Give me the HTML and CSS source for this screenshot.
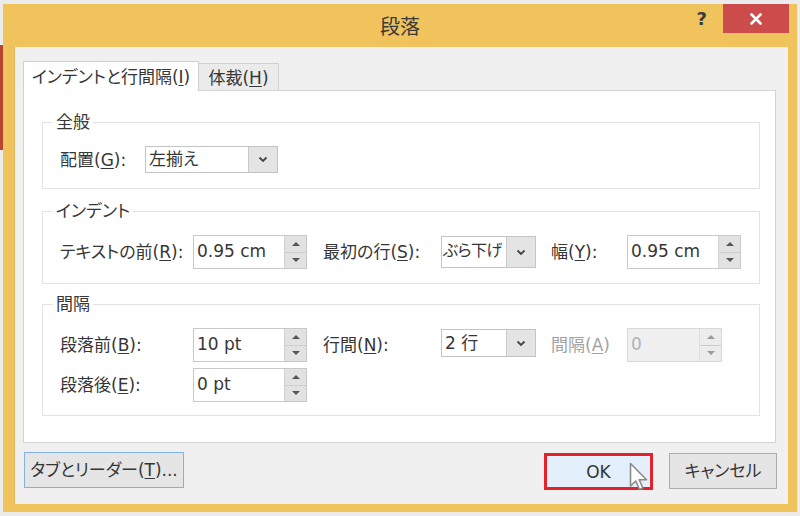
FILE: index.html
```html
<!DOCTYPE html>
<html lang="ja">
  <head>
    <meta charset="UTF-8" />
    <title>段落</title>
    <link rel="stylesheet" href="styles.css">
  </head>
  <body>
    <div class="window">
      <div class="titlebar">
        <span></span>
        <span class="title">段落</span>
        <div class="controls">
          <span class="help">?</span>
          <span class="close">
            <svg width="12" height="12" viewBox="0 0 12 12"><path d="M1.5 1.5L10.5 10.5M10.5 1.5L1.5 10.5" stroke="#fff" stroke-width="2.6" stroke-linecap="round"/></svg>
          </span>
        </div>
      </div>
      <div class="body">
        <div class="tabs">
          <div class="tab active">インデントと行間隔(<u>I</u>)</div>
          <div class="tab">体裁(<u>H</u>)</div>
        </div>
        <div class="panel">
          <fieldset class="group g1">
            <legend>全般</legend>
            <div class="row1">
              <span class="lbl lbl-align">配置(<u>G</u>):</span>
              <div class="select sel-align">
                <span class="val">左揃え</span>
                <span class="drop"><svg width="10" height="7" viewBox="0 0 10 7"><path d="M1.5 1.5L5 5L8.5 1.5" fill="none" stroke="#444" stroke-width="1.8"/></svg></span>
              </div>
            </div>
          </fieldset>

          <fieldset class="group g2">
            <legend>インデント</legend>
            <div class="grid">
              <span class="lbl">テキストの前(<u>R</u>):</span>
              <div class="spin">
                <span class="val">0.95 cm</span>
                <span class="arrows"><i class="up"></i><i class="down"></i></span>
              </div>
              <span class="lbl">最初の行(<u>S</u>):</span>
              <div class="select sel-small">
                <span class="val tight">ぶら下げ</span>
                <span class="drop"><svg width="10" height="7" viewBox="0 0 10 7"><path d="M1.5 1.5L5 5L8.5 1.5" fill="none" stroke="#444" stroke-width="1.8"/></svg></span>
              </div>
              <span class="lbl">幅(<u>Y</u>):</span>
              <div class="spin">
                <span class="val">0.95 cm</span>
                <span class="arrows"><i class="up"></i><i class="down"></i></span>
              </div>
            </div>
          </fieldset>

          <fieldset class="group g3">
            <legend>間隔</legend>
            <div class="grid">
              <span class="lbl">段落前(<u>B</u>):</span>
              <div class="spin">
                <span class="val">10 pt</span>
                <span class="arrows"><i class="up"></i><i class="down"></i></span>
              </div>
              <span class="lbl">行間(<u>N</u>):</span>
              <div class="select sel-small sel-low">
                <span class="val">2 行</span>
                <span class="drop"><svg width="10" height="7" viewBox="0 0 10 7"><path d="M1.5 1.5L5 5L8.5 1.5" fill="none" stroke="#444" stroke-width="1.8"/></svg></span>
              </div>
              <span class="lbl off">間隔(<u>A</u>)</span>
              <div class="spin spin-off">
                <span class="val">0</span>
                <span class="arrows"><i class="up"></i><i class="down"></i></span>
              </div>

              <span class="lbl">段落後(<u>E</u>):</span>
              <div class="spin">
                <span class="val">0 pt</span>
                <span class="arrows"><i class="up"></i><i class="down"></i></span>
              </div>
            </div>
          </fieldset>
        </div>
        <div class="footer">
          <button class="btn btn-tabs">タブとリーダー(<u>T</u>)...</button>
          <span class="spacer"></span>
          <button class="btn btn-ok">OK</button>
          <button class="btn btn-cancel">キャンセル</button>
        </div>
      </div>
    </div>
    <svg class="cursor" width="20" height="30" viewBox="0 0 20 30">
      <path d="M1.5 1.5L1.5 24L6.8 19L10.5 27.5L13.8 26L10.2 17.8L17.5 17.8Z" fill="#fff" stroke="#8a8a8a" stroke-width="1.6" stroke-linejoin="round"/>
    </svg>
  </body>
</html>
```

FILE: styles.css
```css
body {
  margin: 0;
  width: 800px;
  height: 516px;
  overflow: hidden;
  position: relative;
  background: linear-gradient(to bottom, transparent 45px, #b8452f 45px, #b8452f 150px, transparent 150px) no-repeat 0 0 / 3px 100%, #ececec;
  font-family: "DejaVu Sans", "Noto Sans CJK JP", sans-serif;
  font-feature-settings: "palt";
  font-size: 17px;
  color: #363636;
}
u {
  text-decoration-thickness: 1px;
  text-underline-offset: 2px;
}
.window {
  margin: 4px 3px 0 3px;
  width: 794px;
  height: 508px;
  background: #f0c35c;
  display: flex;
  flex-direction: column;
}
.titlebar {
  height: 43px;
  display: grid;
  grid-template-columns: 1fr auto 1fr;
  align-items: center;
}
.title {
  font-family: "Noto Sans CJK JP", sans-serif;
  font-size: 20px;
  line-height: 24px;
  color: #3a3a3a;
  padding-top: 1px;
}
.controls {
  display: flex;
  justify-content: flex-end;
  align-self: start;
  padding-right: 8px;
}
.help {
  font-weight: bold;
  font-size: 18px;
  line-height: 20px;
  color: #3b3b3b;
  margin-top: 5px;
  margin-right: 16px;
}
.close {
  width: 66px;
  height: 29px;
  background: #cc4b4b;
  display: flex;
  align-items: center;
  justify-content: center;
}
.body {
  margin: 0 9px 0 11px;
  height: 457px;
  background: #f0f0f0;
  border-left: 1px solid #d9b463;
  padding: 14px 12px 0 8px;
  box-sizing: border-box;
}
.tabs {
  display: flex;
  align-items: flex-end;
  height: 29px;
}
.tab {
  box-sizing: border-box;
  height: 27px;
  width: 80px;
  border: 1px solid #d0d0d0;
  border-bottom: none;
  border-left: none;
  background: #ebebeb;
  text-align: center;
  line-height: 28px;
  white-space: nowrap;
}
.tab.active {
  position: relative;
  z-index: 1;
  width: 176px;
  height: 30px;
  margin-bottom: -1px;
  border-left: 1px solid #d0d0d0;
  background: #fff;
  line-height: 30px;
}
.panel {
  box-sizing: border-box;
  height: 353px;
  background: #fff;
  border: 1px solid #d3d3d3;
  padding: 21px 15px 0 18px;
}
.group {
  margin: 0;
  border: 1px solid #e3e3e3;
  padding: 14px 15px 15px 10px;
  min-width: 0;
}
.group legend {
  padding: 0 3px;
  line-height: 20px;
  height: 20px;
  margin-top: 2px;
}
.g2 {
  margin-top: 12px;
  padding-bottom: 14px;
}
.g3 {
  margin-top: 10px;
  padding-bottom: 13px;
}
.lbl {
  line-height: 22px;
  white-space: nowrap;
}
.lbl.off {
  color: #a2a2a2;
}
.row1 {
  display: flex;
  align-items: center;
  padding-left: 7px;
}
.lbl-align {
  width: 85px;
}
.grid {
  display: grid;
  grid-template-columns: 133px 130px 118px 110px 76px 114px;
  row-gap: 6px;
  align-items: center;
  padding-left: 7px;
}
.select {
  box-sizing: border-box;
  display: flex;
  height: 32px;
  border: 1px solid #c4c4c4;
  background: #fff;
}
.select .val {
  flex: 1;
  padding-left: 3px;
  line-height: 28px;
  white-space: nowrap;
  overflow: hidden;
}
.select .tight {
  padding-left: 1px;
  font-size: 16px;
  letter-spacing: -0.6px;
}
.drop {
  width: 28px;
  background: #e4e4e4;
  border-left: 1px solid #cacaca;
  display: flex;
  align-items: center;
  justify-content: center;
}
.sel-align {
  width: 133px;
  height: 27px;
}
.sel-align .val {
  line-height: 25px;
}
.sel-small {
  width: 95px;
}
.sel-low {
  height: 28px;
  align-self: start;
  margin-top: 1px;
}
.sel-low .val {
  line-height: 26px;
}
.spin {
  box-sizing: border-box;
  display: flex;
  width: 114px;
  height: 34px;
  border: 1px solid #c8c8c8;
  background: #fff;
}
.spin .val {
  flex: 1;
  padding-left: 3px;
  font-size: 17px;
  line-height: 31px;
}
.arrows {
  width: 21px;
  background: #e2e2e2;
  border-left: 1px solid #d2d2d2;
  display: flex;
  flex-direction: column;
}
.arrows i {
  flex: 1;
  display: flex;
  align-items: center;
  justify-content: center;
}
.arrows i + i {
  border-top: 1px solid #cdcdcd;
}
.up::before,
.down::before {
  content: "";
  border-left: 4px solid transparent;
  border-right: 4px solid transparent;
}
.up::before {
  border-bottom: 4px solid #555;
}
.down::before {
  border-top: 4px solid #555;
}
.spin-off {
  width: 95px;
  background: #f0f0f0;
  border-color: #d8d8d8;
  color: #b2b2b2;
}
.spin-off .arrows {
  background: #ececec;
  border-left-color: #e0e0e0;
}
.spin-off .up::before {
  border-bottom-color: #9a9a9a;
}
.spin-off .down::before {
  border-top-color: #9a9a9a;
}
.footer {
  display: flex;
  align-items: flex-start;
  margin-top: 9px;
  padding-left: 1px;
  margin-right: -1px;
}
.spacer {
  flex: 1;
}
.btn {
  box-sizing: border-box;
  height: 36px;
  border: 1px solid #adadad;
  background: #e5e5e5;
  font: inherit;
  font-size: 17px;
  line-height: 22px;
  color: #363636;
  padding: 0;
  margin-top: 1px;
}
.btn-tabs {
  width: 160px;
  margin-top: 0;
  border-color: #7fb3e8;
}
.btn-ok {
  width: 109px;
  height: 37px;
  border: 3px solid #e3222b;
  background: #e3effa;
}
.btn-cancel {
  width: 108px;
  margin-left: 16px;
}
.cursor {
  position: absolute;
  left: 629px;
  top: 462px;
}
```
